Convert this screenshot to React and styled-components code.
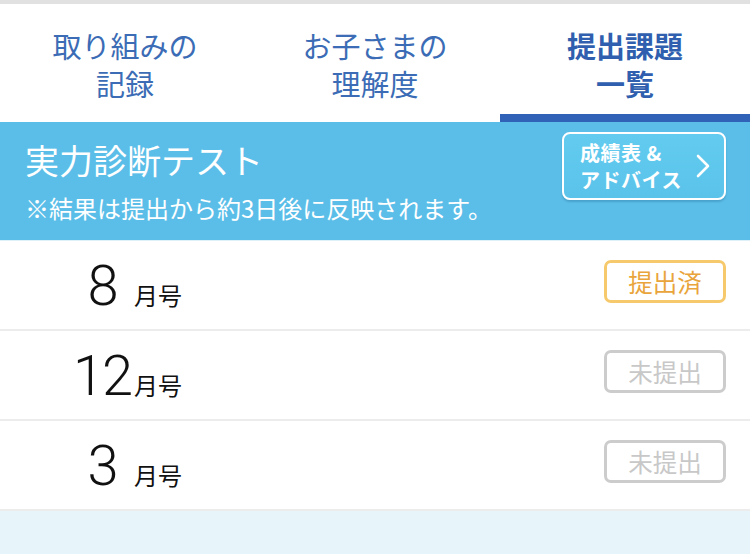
import React from "react";
import styled, { createGlobalStyle } from "styled-components";

const Global = createGlobalStyle`
  html, body { margin: 0; padding: 0; background: #ffffff; }
  body { font-family: "Noto Sans CJK JP", "Noto Sans", sans-serif; width: 750px; height: 554px; overflow: hidden; }
`;

const Page = styled.div`
  width: 750px;
  height: 554px;
  display: flex;
  flex-direction: column;
  background: #e7f5fb;
  border-top: 4px solid #e1e1e1;
  box-sizing: border-box;
`;

const TabBar = styled.nav`
  display: grid;
  grid-template-columns: repeat(3, 1fr);
  height: 118px;
  background: #ffffff;
`;

const Tab = styled.div`
  display: flex;
  align-items: center;
  justify-content: center;
  text-align: center;
  font-size: 29px;
  line-height: 38px;
  padding-top: 2px;
  color: ${(p) => (p.$active ? "#2f5fae" : "#3b6cb5")};
  font-weight: ${(p) => (p.$active ? 700 : 400)};
  box-shadow: ${(p) => (p.$active ? "inset 0 -8px 0 #3062b8" : "none")};
`;

const Header = styled.section`
  height: 118px;
  box-sizing: border-box;
  background: #5bbee8;
  display: flex;
  justify-content: space-between;
  align-items: flex-start;
  padding: 10px 24px 0 25px;
  color: #ffffff;
`;

const HeaderText = styled.div`
  display: flex;
  flex-direction: column;
  padding-top: 3px;
`;

const Title = styled.h1`
  margin: 0;
  font-size: 34px;
  font-weight: 400;
  line-height: 50px;
`;

const Note = styled.p`
  margin: 8px 0 0;
  font-size: 24px;
  line-height: 30px;
`;

const ReportButton = styled.button`
  width: 164px;
  height: 68px;
  box-sizing: border-box;
  border: 2px solid #ffffff;
  border-radius: 8px;
  background: linear-gradient(#62cbef, #5bc3ea);
  box-shadow: 0 2px 2px rgba(40, 110, 150, 0.35);
  display: flex;
  align-items: center;
  justify-content: space-between;
  padding: 0 14px 0 16px;
  color: #ffffff;
  font-family: inherit;
  font-size: 20px;
  font-weight: 700;
  line-height: 27px;
  text-align: left;
  letter-spacing: 0.5px;
`;

const ButtonLabel = styled.span`
  display: flex;
  flex-direction: column;
`;

const List = styled.ul`
  list-style: none;
  margin: 0;
  padding: 0;
  border-top: 1px solid #dff0f8;
`;

const Row = styled.li`
  height: 88px;
  background: #ffffff;
  border-bottom: 2px solid #ececec;
  display: flex;
  align-items: center;
  justify-content: space-between;
  padding: 0 24px 0 72px;
`;

const Month = styled.div`
  display: flex;
  align-items: baseline;
  padding-top: 2px;
`;

const Num = styled.span`
  width: 60px;
  text-align: center;
  font-family: Roboto, "Liberation Sans", sans-serif;
  font-weight: 300;
  font-size: 56px;
  letter-spacing: -2px;
  color: #111111;
  line-height: 1;
`;

const Unit = styled.span`
  margin-left: 2px;
  font-size: 24px;
  color: #111111;
`;

const Badge = styled.span`
  width: 122px;
  height: 43px;
  box-sizing: border-box;
  border: 3px solid ${(p) => (p.$done ? "#f6ca6c" : "#cccccc")};
  border-radius: 7px;
  display: flex;
  align-items: center;
  justify-content: center;
  font-size: 24.5px;
  color: ${(p) => (p.$done ? "#e9a43c" : "#c8c8c8")};
  margin-top: -7px;
`;

const Chevron = () => (
  <svg width="14" height="24" viewBox="0 0 14 24" fill="none">
    <path d="M2 2 L12 12 L2 22" stroke="#ffffff" strokeWidth="2.6" strokeLinecap="round" strokeLinejoin="round" />
  </svg>
);

const rows = [
  { n: "8", done: true },
  { n: "12", done: false },
  { n: "3", done: false },
];

export default function App() {
  return (
    <>
      <Global />
      <Page>
        <TabBar>
          <Tab>取り組みの<br />記録</Tab>
          <Tab>お子さまの<br />理解度</Tab>
          <Tab $active>提出課題<br />一覧</Tab>
        </TabBar>
        <Header>
          <HeaderText>
            <Title>実力診断テスト</Title>
            <Note>※結果は提出から約3日後に反映されます。</Note>
          </HeaderText>
          <ReportButton>
            <ButtonLabel>
              <span>成績表 &amp;</span>
              <span>アドバイス</span>
            </ButtonLabel>
            <Chevron />
          </ReportButton>
        </Header>
        <List>
          {rows.map((r) => (
            <Row key={r.n}>
              <Month>
                <Num>{r.n}</Num>
                <Unit>月号</Unit>
              </Month>
              <Badge $done={r.done}>{r.done ? "提出済" : "未提出"}</Badge>
            </Row>
          ))}
        </List>
      </Page>
    </>
  );
}
